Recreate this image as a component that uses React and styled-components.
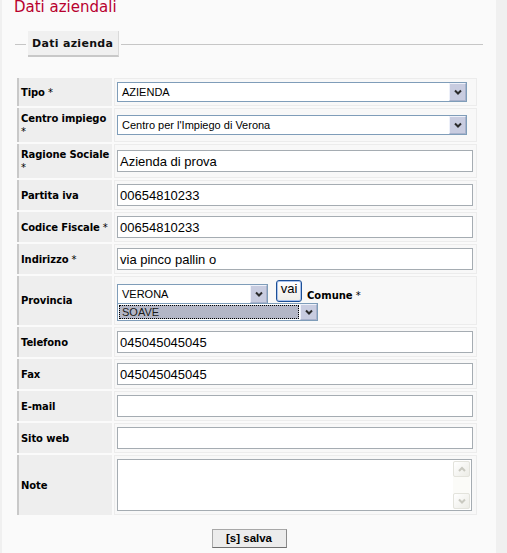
import React from 'react';
import styled, { createGlobalStyle, css } from 'styled-components';

const Global = createGlobalStyle`
  html, body { margin: 0; padding: 0; background: #f0f0f0; }
  * { box-sizing: border-box; }
`;

const Page = styled.div`
  width: 494px;
  margin-left: 2px;
  min-height: 553px;
  background: #fafafa;
  overflow: hidden;
  font-family: "DejaVu Sans", Verdana, sans-serif;
`;

const Title = styled.h1`
  margin: 0 0 0 12px;
  font: normal 15px/15px "DejaVu Sans", Verdana, sans-serif;
  color: #b8002e;
`;

const FieldHead = styled.div`
  display: flex;
  align-items: center;
  gap: 2px;
  width: 468px;
  margin: 16px 0 0 13px;
`;

const Rule = styled.div`
  height: 1px;
  background: #c6c6c6;
  ${p => (p.$w ? css`width: ${p.$w}px; flex: none;` : css`flex: 1;`)}
`;

const Legend = styled.div`
  height: 26px;
  display: flex;
  align-items: center;
  padding: 0 5px 0 4px;
  background: #f0f0f0;
  border-right: 1px solid #dadada;
  border-bottom: 2px solid #c8c8c8;
  font: bold 11px "DejaVu Sans", Verdana, sans-serif;
  letter-spacing: 0.3px;
  color: #111;
`;

const Form = styled.div`
  display: grid;
  grid-template-columns: 95px 363px;
  gap: 2px;
  margin: 21px 0 0 15px;
`;

const Label = styled.div`
  display: flex;
  align-items: center;
  padding: 4px 1px 4px 2px;
  background: #eeeeee;
  border-left: 2px solid #c9c9c9;
  font: bold 10px/13px "DejaVu Sans", Verdana, sans-serif;
  letter-spacing: -0.1px;
  color: #000;
`;

const Req = styled.span`
  font-weight: normal;
`;

const Value = styled.div`
  display: flex;
  align-items: center;
  padding: 3px 2px;
  background: #f8f8f8;
  border: 1px solid #ececec;
`;

const TextInput = styled.div`
  width: 356px;
  height: 22px;
  display: flex;
  align-items: center;
  padding-left: 2px;
  background: #fff;
  border: 1px solid #a5acb2;
  font: 13px "Liberation Sans", Arial, sans-serif;
  color: #000;
  white-space: nowrap;
`;

const Select = styled.div`
  display: flex;
  flex: none;
  width: ${p => p.$w}px;
  height: ${p => p.$h ?? 20}px;
  margin-top: ${p => p.$mt ?? 0}px;
  background: #fff;
  border: 1px solid #7f9db9;
`;

const SelText = styled.div`
  flex: 1;
  display: flex;
  align-items: center;
  padding-left: 4px;
  font: 11px "Liberation Sans", Arial, sans-serif;
  color: #000;
  white-space: nowrap;
  overflow: hidden;
  ${p => p.$focus && css`
    margin: 1px;
    padding-left: 2px;
    background: #b3b6c6;
    border: 1px dotted #000;
    color: #1a1a1a;
  `}
`;

const DropBtn = styled.div`
  flex: none;
  width: 17px;
  display: flex;
  align-items: center;
  justify-content: center;
  background: #c8cce0;
  border: 1px solid;
  border-color: #eef1fa #a9b2cc #a9b2cc #eef1fa;
`;

const Chevron = ({ color = '#2b2b2b', up }) => (
  <svg width="8" height="6" viewBox="0 0 8 6">
    <path
      d={up ? 'M1 5 L4 2 L7 5' : 'M1 1.5 L4 4.5 L7 1.5'}
      fill="none"
      stroke={color}
      strokeWidth="2"
    />
  </svg>
);

const Provincia = styled.div`
  display: flex;
  flex-direction: column;
`;

const ProvRow = styled.div`
  display: flex;
  align-items: flex-start;
`;

const VaiButton = styled.button`
  width: 26px;
  height: 22px;
  margin-left: 8px;
  padding: 0 0 4px;
  background: linear-gradient(#ffffff, #eeede8);
  border: 1px solid #1c4f96;
  border-radius: 3px;
  box-shadow: inset 0 0 0 1px #a9c2ec;
  font: 13px/14px "Liberation Sans", Arial, sans-serif;
  color: #000;
`;

const InlineLabel = styled.span`
  margin: 9px 0 0 5px;
  font: bold 10px/13px "DejaVu Sans", Verdana, sans-serif;
  color: #000;
`;

const TextArea = styled.div`
  width: 355px;
  height: 52px;
  display: flex;
  justify-content: flex-end;
  padding: 1px;
  background: #fff;
  border: 1px solid #a5acb2;
`;

const ScrollBar = styled.div`
  width: 17px;
  display: flex;
  flex-direction: column;
  justify-content: space-between;
  background: #fbfbf8;
`;

const ScrollArrow = styled.div`
  height: 16px;
  display: flex;
  align-items: center;
  justify-content: center;
  background: linear-gradient(135deg, #ffffff, #ecece6);
  border: 1px solid #e3e3dc;
  border-radius: 2px;
`;

const Footer = styled.div`
  display: flex;
  justify-content: center;
  margin-top: 14px;
`;

const SaveButton = styled.button`
  width: 75px;
  height: 19px;
  padding: 0;
  background: #ececec;
  border: 1px solid #a8a8a8;
  border-bottom-color: #707070;
  border-right-color: #8a8a8a;
  font: bold 11.5px/15px "Liberation Sans", Arial, sans-serif;
  color: #000;
`;

const textRows = [
  ['Partita iva', false, '00654810233'],
  ['Codice Fiscale', true, '00654810233'],
  ['Indirizzo', true, 'via pinco pallin o'],
];

const contactRows = [
  ['Telefono', '045045045045'],
  ['Fax', '045045045045'],
  ['E-mail', ''],
  ['Sito web', ''],
];

const Lbl = ({ text, req }) => (
  <Label>
    <span>
      {text}
      {req && <Req> *</Req>}
    </span>
  </Label>
);

export default function App() {
  return (
    <>
      <Global />
      <Page>
        <Title>Dati aziendali</Title>
        <FieldHead>
          <Rule $w={11} />
          <Legend>Dati azienda</Legend>
          <Rule />
        </FieldHead>

        <Form>
          <Lbl text="Tipo" req />
          <Value>
            <Select $w={350}>
              <SelText>AZIENDA</SelText>
              <DropBtn><Chevron /></DropBtn>
            </Select>
          </Value>

          <Lbl text="Centro impiego" req />
          <Value>
            <Select $w={350}>
              <SelText>Centro per l'Impiego di Verona</SelText>
              <DropBtn><Chevron /></DropBtn>
            </Select>
          </Value>

          <Lbl text="Ragione Sociale" req />
          <Value>
            <TextInput>Azienda di prova</TextInput>
          </Value>

          {textRows.map(([l, r, v]) => (
            <React.Fragment key={l}>
              <Lbl text={l} req={r} />
              <Value>
                <TextInput>{v}</TextInput>
              </Value>
            </React.Fragment>
          ))}

          <Lbl text="Provincia" />
          <Value>
            <Provincia>
              <ProvRow>
                <Select $w={151} $mt={4}>
                  <SelText>VERONA</SelText>
                  <DropBtn><Chevron /></DropBtn>
                </Select>
                <VaiButton>vai</VaiButton>
                <InlineLabel>
                  Comune<Req> *</Req>
                </InlineLabel>
              </ProvRow>
              <Select $w={201} $h={18} $mt={-1}>
                <SelText $focus>SOAVE</SelText>
                <DropBtn><Chevron /></DropBtn>
              </Select>
            </Provincia>
          </Value>

          {contactRows.map(([l, v]) => (
            <React.Fragment key={l}>
              <Lbl text={l} />
              <Value>
                <TextInput>{v}</TextInput>
              </Value>
            </React.Fragment>
          ))}

          <Lbl text="Note" />
          <Value>
            <TextArea>
              <ScrollBar>
                <ScrollArrow><Chevron up color="#c9c9c0" /></ScrollArrow>
                <ScrollArrow><Chevron color="#c9c9c0" /></ScrollArrow>
              </ScrollBar>
            </TextArea>
          </Value>
        </Form>

        <Footer>
          <SaveButton>[s] salva</SaveButton>
        </Footer>
      </Page>
    </>
  );
}
